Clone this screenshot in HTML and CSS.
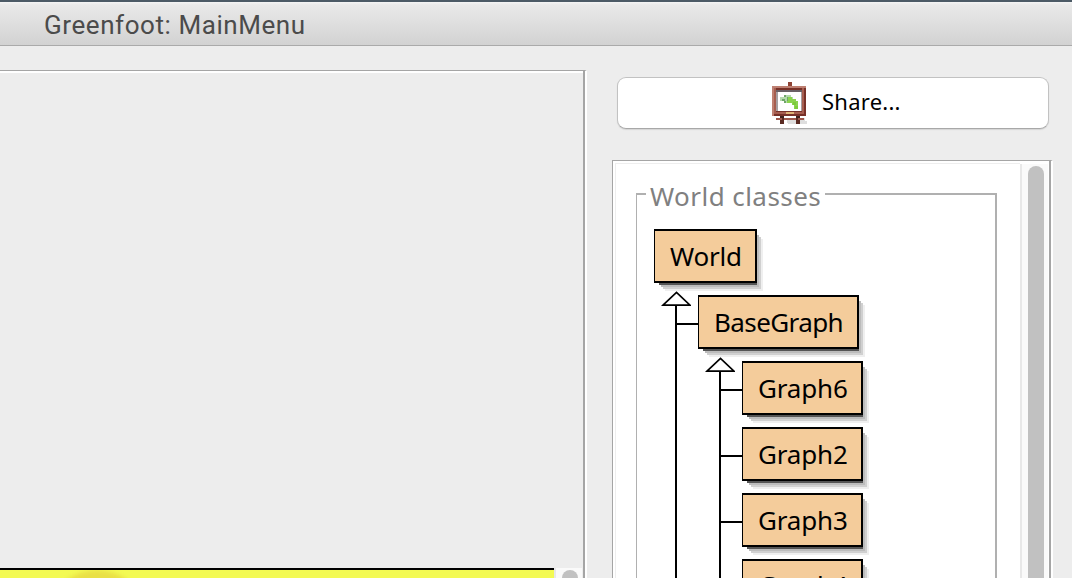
FILE: index.html
```html
<!DOCTYPE html>
<html lang="en">
<head>
<meta charset="utf-8">
<title>Greenfoot: MainMenu</title>
<link rel="stylesheet" href="styles.css">
</head>
<body>
<header class="titlebar"><span class="title">Greenfoot: MainMenu</span></header>
<main class="workspace">
  <section class="viewport">
    <div class="world"><div class="world-glow"></div></div>
    <div class="scrollbar world-scroll"><div class="thumb"></div></div>
  </section>
  <aside class="sidebar">
    <button class="share">
      <svg class="easel" width="50" height="50" viewBox="0 0 50 50" shape-rendering="crispEdges">
        <path fill="#dedede" d="M21 40h19v3h2v3H23z"/>
        <path fill="#8f4335" d="M23 4h4v5h-4z"/>
        <path fill="#be8072" d="M7 8h34v30H7z"/>
        <path fill="#783128" d="M9 10h32v28H9z"/>
        <path fill="#a65e50" d="M9 10h2v25H9zM37 10h2v26h-2zM9 34h29v2H9z"/>
        <path fill="#6a6065" d="M11 12h26v2H11z"/>
        <path fill="#a59fa2" d="M11 14h26v19H11z"/>
        <path fill="#fff" d="M13 14h23v19H13z"/>
        <path fill="#b4d9ac" d="M15 19h4v-2h7v2h2v6h-9v-2h-4z"/>
        <path fill="#6fa668" d="M19 17h2v2h-2zM17 21h3v2h-3zM22 19h3v4h-3zM19 23h2v2h-2z"/>
        <path fill="#8bd34d" d="M23 19h4v2h4v2h2v8h-4v-4h-2v-2h-5v-2h1z"/>
        <path fill="#7dcb3c" d="M28 24h3v3h-3zM30 28h3v3h-3z"/>
        <path fill="#dfb377" d="M21 34h8v2h-8z"/>
        <path fill="#40211c" d="M15 38h4v2h-4zM31 38h4v2h-4z"/>
        <path fill="#9e584c" d="M11 40h28v2H11z"/>
        <path fill="#5a2b23" d="M17 40h2v2h-2zM15 42h4v4h-4zM31 40h2v2h2v4h-4z"/>
      </svg>
      <span class="share-label">Share...</span>
    </button>
    <section class="classes">
      <div class="class-scroll">
        <fieldset class="group">
          <legend class="legend">World classes</legend>
          <ul class="tree">
            <li class="node"><span class="class world-class">World</span>
              <ul class="branch">
                <li class="node arrow-row"><svg class="arrow" width="30" height="16" viewBox="0 0 30 16"><path d="M2 14.2 15.5 1.5 29 14.2z"/></svg><span class="class base-class">BaseGraph</span>
                  <ul class="branch">
                    <li class="node arrow-row"><svg class="arrow" width="30" height="16" viewBox="0 0 30 16"><path d="M2 14.2 15.5 1.5 29 14.2z"/></svg><span class="class">Graph6</span></li>
                    <li class="node"><span class="class">Graph2</span></li>
                    <li class="node"><span class="class">Graph3</span></li>
                    <li class="node"><span class="class last-class">Graph4</span></li>
                  </ul>
                </li>
              </ul>
            </li>
          </ul>
        </fieldset>
      </div>
      <div class="scrollbar"><div class="thumb"></div></div>
    </section>
  </aside>
</main>
</body>
</html>
```
FILE: styles.css
```css
* { box-sizing: border-box; }
body {
  margin: 0;
  height: 578px;
  overflow: hidden;
  display: flex;
  flex-direction: column;
  background: #ededed;
  font-family: "Noto Sans", "Open Sans", sans-serif;
  color: #000;
}
.titlebar {
  flex: none;
  height: 46px;
  padding: 1px 0 0 44px;
  border-top: 2px solid #4c5a66;
  border-bottom: 1px solid #aaa;
  background: linear-gradient(#f4f4f4 0, #e9e9e9 3px, #d2d2d2 100%);
  font: 26px/44px Roboto, Inter, sans-serif;
  color: #4b4b4b;
}
.title { letter-spacing: 0.57px; white-space: nowrap; }
.workspace { flex: 1; display: flex; min-height: 0; }
.viewport {
  width: 587px;
  margin-top: 24px;
  padding-top: 495px;
  border-top: 1px solid #a5a5a5;
  border-right: 2px solid #fff;
  display: flex;
  background: linear-gradient(#a5a5a5, #a5a5a5) right / 2px 100% no-repeat, linear-gradient(#fff, #fff) top / 100% 2px no-repeat;
  overflow: hidden;
}
.world { width: 554px; height: 40px; margin-top: 2px; border-top: 2px solid #000; background: #f3fa53; overflow: hidden; }
.world-glow { width: 100px; height: 100px; margin: 0 0 0 47px; border-radius: 50%; background: #e9e046; filter: blur(2px); }
.sidebar { width: 441px; margin-left: 25px; display: flex; flex-direction: column; }
.share {
  flex: none;
  width: 432px;
  height: 52px;
  margin: 31px 0 0 5px;
  padding: 0 0 0 3px;
  border: 1px solid #c2c2c2;
  border-bottom-color: #a8a8a8;
  border-radius: 9px;
  background: #fff;
  box-shadow: 0 1px 1px #d4d4d4;
  display: flex;
  align-items: center;
  justify-content: flex-start;
  font: 22px "Noto Sans", sans-serif;
  color: #000;
}
.easel { margin-left: 144px; }
.share-label { margin: -4px 0 0 7px; letter-spacing: 0.25px; }
.classes {
  flex: 1;
  display: flex;
  margin-top: 31px;
  padding: 2px 0 0 2px;
  border-top: 1px solid #a5a5a5;
  border-left: 1px solid #a5a5a5;
  border-right: 2px solid #fff;
  background: linear-gradient(#a5a5a5, #a5a5a5) right / 2px 100% no-repeat, #fff;
  overflow: hidden;
}
.class-scroll { width: 405px; height: 600px; border-top: 1px solid #eee; border-left: 1px solid #eee; padding: 29px 0 0 20px; }
.scrollbar { width: 28px; height: 600px; margin-top: 1px; border-left: 2px solid #e8e8e8; background: #fafafa; padding: 2px 0 0 6px; }
.world-scroll { margin-top: 2px; padding-top: 2px; }
.thumb { width: 16px; height: 560px; border-radius: 8px; background: #c1c1c1; }
.group { position: relative; width: 361px; height: 560px; margin: 0; padding: 0 0 0 17px; border: 1px solid #b0b0b0; border-top-width: 2px; border-right-width: 2px; }
.legend { height: 2px; margin-left: -8px; padding: 0 4px; line-height: 6px; font-size: 26px; letter-spacing: 0.45px; color: #808080; white-space: nowrap; }
.tree, .branch { list-style: none; margin: 0; padding: 0; }
.tree { padding-top: 34px; }
.branch { position: relative; padding: 12px 0 0 44px; }
.branch::before { content: ""; position: absolute; left: 21px; top: 23px; width: 2px; height: 600px; background: #000; }
.node { position: relative; }
.branch > .node + .node { margin-top: 12px; }
.branch > .node::before { content: ""; position: absolute; left: -22px; top: 28px; width: 22px; height: 2px; background: #000; }
.arrow { position: absolute; left: -37px; top: -4px; fill: #fff; stroke: #000; stroke-width: 1.7; }
.class {
  position: relative;
  z-index: 0;
  display: block;
  width: 121px;
  height: 54px;
  padding-left: 15px;
  border: 2px solid #000;
  border-left-width: 1px;
  background: #f4cc9b;
  font-size: 26px;
  line-height: 51px;
  white-space: nowrap;
  letter-spacing: -0.15px;
}
.class::before, .class::after { content: ""; position: absolute; }
.class::before { inset: 0; background: #f4cc9b; z-index: -1; }
.class::after {
  z-index: -2;
  left: 4px; top: 0; right: -2px; bottom: -2px;
  box-shadow: 0 2px #555, 2px 4px #bcbcbc, 4px 6px #d0d0d0, 6px 8px #efefef;
}
.world-class { width: 103px; letter-spacing: -0.2px; }
.base-class { width: 161px; letter-spacing: -0.6px; }
.last-class { line-height: 49px; }
```
